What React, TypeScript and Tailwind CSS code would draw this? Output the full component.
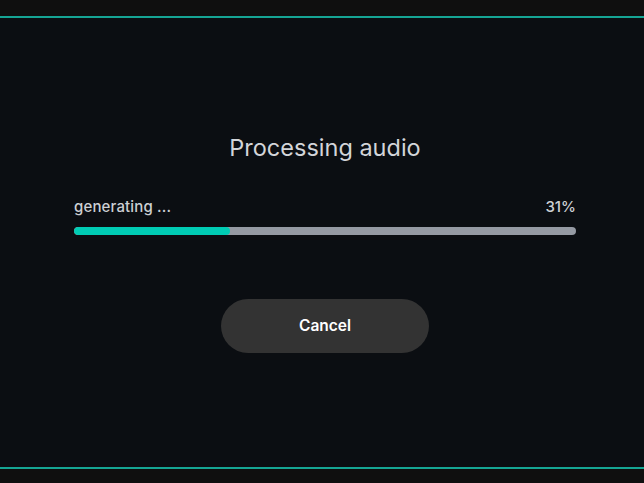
import React from "react";

export default function App() {
  const pct = 31;
  return (
    <div className="w-[644px] h-[483px] bg-[#0f0f0f] pt-[16px]" style={{ fontFamily: "Inter, 'Noto Sans', sans-serif" }}>
      <div className="h-[453px] bg-[#0b0e12] border-y-2 border-[#15a594] pl-[74px] pr-[68px] pt-[115px] flex flex-col">
        <h1 className="text-center text-[23.5px] leading-[30px] text-[#d3d5d9] font-normal">Processing audio</h1>
        <div className="mt-[34px] flex justify-between text-[15px] leading-[20px] text-[#cdd0d4] font-medium">
          <span className="tracking-[0.01em]">generating ...</span>
          <span>{pct}%</span>
        </div>
        <div className="mt-[10px] h-[8px] w-full rounded-full bg-[#959aa3] overflow-hidden">
          <div className="h-full rounded-full bg-[#00ccb4]" style={{ width: `${pct}%` }} />
        </div>
        <div className="mt-[64px] flex justify-center">
          <button className="w-[208px] h-[54px] rounded-full bg-[#333333] text-white text-[15.5px] font-semibold">
            Cancel
          </button>
        </div>
      </div>
    </div>
  );
}
